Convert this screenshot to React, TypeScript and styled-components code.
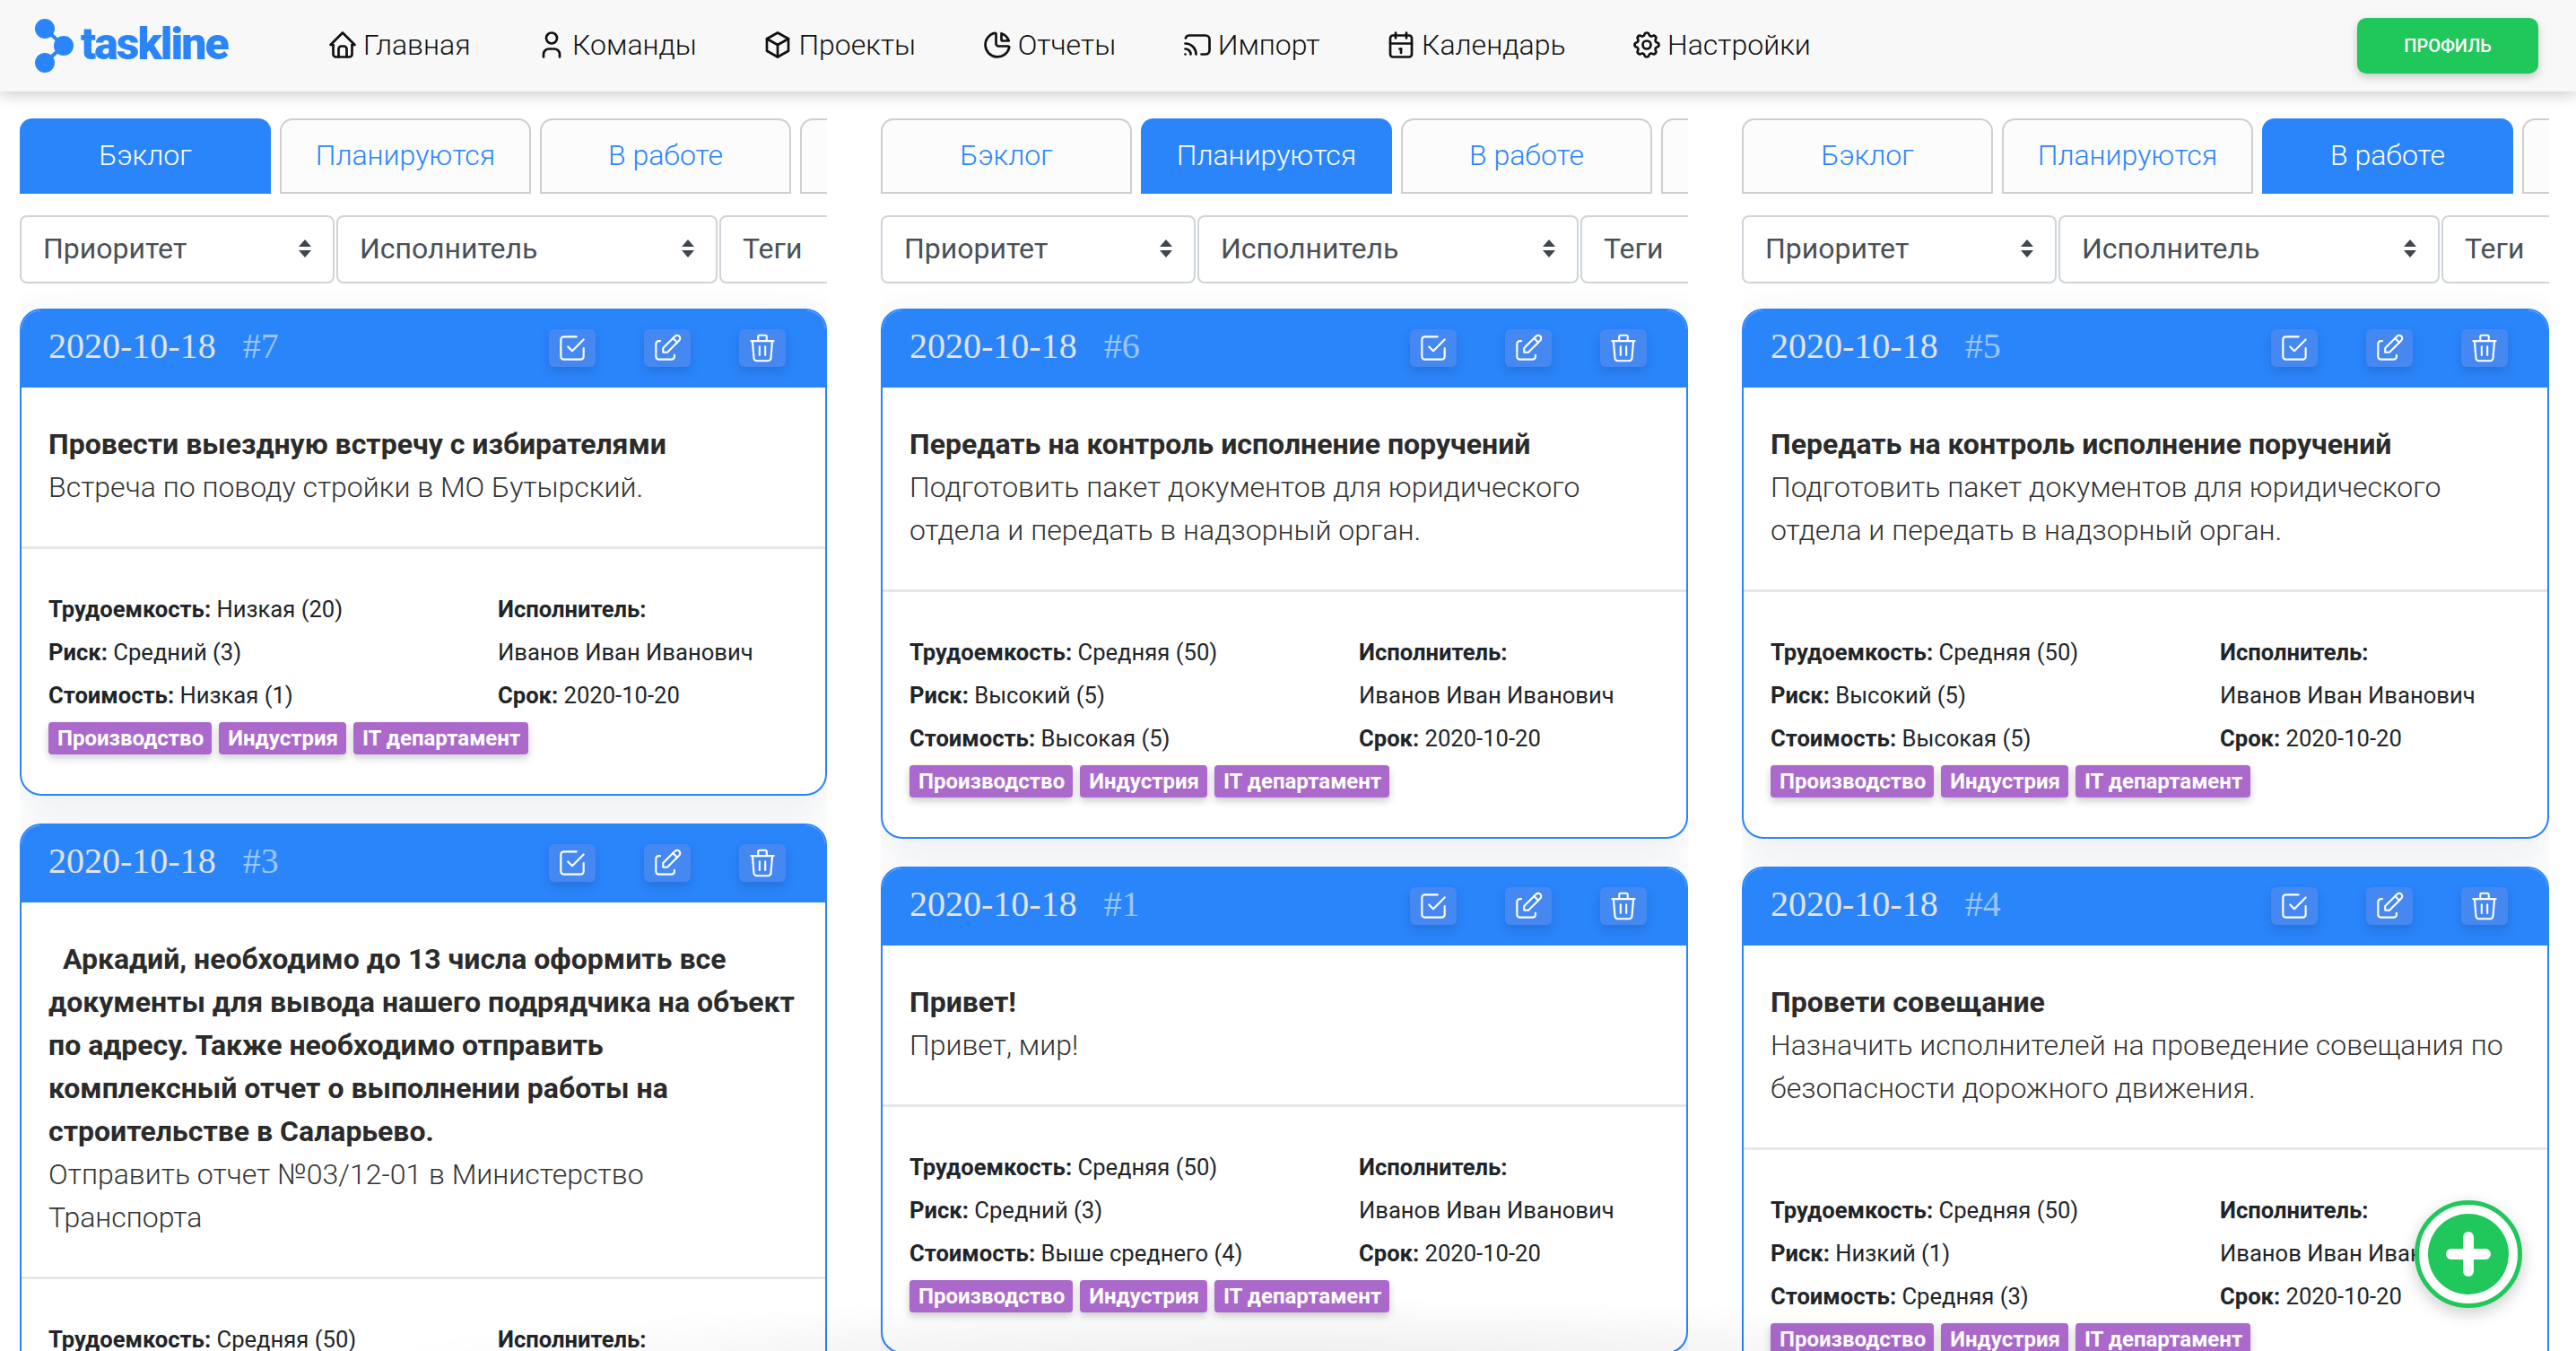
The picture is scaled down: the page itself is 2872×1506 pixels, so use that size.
import styled, { createGlobalStyle } from "styled-components";
import {
  TbBox,
  TbCalendar,
  TbCast,
  TbChartPie,
  TbCheckbox,
  TbEdit,
  TbHome,
  TbSettings,
  TbTrash,
  TbUser,
} from "react-icons/tb";

const GlobalStyle = createGlobalStyle`
  html, body {
    margin: 0;
    height: 100%;
    overflow: hidden;
    background: #fff;
    font-family: Roboto, "Noto Sans", sans-serif;
    color: #212529;
  }
  * { box-sizing: border-box; }
`;

const Page = styled.div`
  width: 2872px;
  height: 1506px;
  overflow: hidden;
  display: flex;
  flex-direction: column;
`;

const Navbar = styled.header`
  position: relative;
  z-index: 5;
  flex: none;
  height: 102px;
  display: flex;
  align-items: center;
  padding: 0 42px 0 38px;
  background: #f8f8f8;
  box-shadow: 0 3px 16px rgba(0, 0, 0, 0.22);
`;

const Logo = styled.div`
  display: flex;
  align-items: center;
  gap: 6px;
  width: 326px;
  flex: none;
`;

const LogoText = styled.span`
  margin-top: -4px;
  color: #2a85fb;
  font-size: 50px;
  font-weight: 900;
  letter-spacing: -2px;
  line-height: 1;
`;

const Menu = styled.nav`
  display: flex;
  align-items: center;
  gap: 72.5px;
  flex: 1;
  padding-bottom: 2px;
`;

const MenuItem = styled.a`
  display: flex;
  align-items: center;
  gap: 5px;
  font-size: 32px;
  font-weight: 300;
  color: #111;
  svg {
    width: 36px;
    height: 36px;
    stroke-width: 1.8;
  }
`;

const ProfileButton = styled.button`
  width: 202px;
  height: 62px;
  border: 0;
  border-radius: 10px;
  background: #20c75a;
  color: #fff;
  font-family: inherit;
  font-size: 20px;
  font-weight: 500;
  text-transform: uppercase;
  box-shadow: 0 4px 10px rgba(0, 0, 0, 0.2);
`;

const Board = styled.main`
  flex: 1;
  min-height: 0;
  display: grid;
  grid-template-columns: repeat(3, 900px);
  gap: 60px;
  padding: 30px 0 0 22px;
`;

const Column = styled.section`
  min-width: 0;
  height: 100%;
  overflow: hidden;
  display: flex;
  flex-direction: column;
`;

const Tabs = styled.div`
  flex: none;
  display: flex;
  gap: 10px;
`;

const Tab = styled.div<{ $active?: boolean }>`
  flex: none;
  width: 280px;
  height: 84px;
  display: flex;
  align-items: center;
  justify-content: center;
  padding-bottom: 2px;
  border: 2px solid ${(p) => (p.$active ? "#2a85fb" : "#cfcfcf")};
  border-radius: 14px 14px 0 0;
  background: ${(p) => (p.$active ? "#2a85fb" : "#fcfcfc")};
  color: ${(p) => (p.$active ? "#fff" : "#2a85fb")};
  font-size: 32px;
  font-weight: 300;
`;

const Filters = styled.div`
  flex: none;
  display: flex;
  gap: 2px;
  margin-top: 24px;
`;

const Select = styled.div<{ $width: number }>`
  flex: none;
  width: ${(p) => p.$width}px;
  height: 76px;
  display: flex;
  align-items: center;
  justify-content: space-between;
  padding: 0 22px 2px 24px;
  border: 2px solid #ced4da;
  border-radius: 8px;
  background: #fff;
  color: #495057;
  font-size: 32px;
  font-weight: 400;
`;

const CardList = styled.div`
  flex: 1;
  min-height: 0;
  overflow: hidden;
  display: flex;
  flex-direction: column;
  gap: 31px;
  margin-top: 8px;
  padding-top: 20px;
`;

const Card = styled.article`
  flex: none;
  border: 2px solid #2a85fb;
  border-radius: 24px;
  background: #fff;
  overflow: hidden;
  box-shadow: 0 10px 44px rgba(30, 60, 100, 0.1);
`;

const CardHeader = styled.div`
  display: flex;
  align-items: center;
  justify-content: space-between;
  margin: -2px -2px 0;
  padding: 0 46px 0 32px;
  height: 88px;
  background: #2a85fb;
`;

const CardDate = styled.div`
  font-family: "Liberation Serif", "Times New Roman", serif;
  font-size: 40px;
  margin-top: -6px;
  color: #e2e2e2;
`;

const CardNumber = styled.span`
  margin-left: 30px;
  color: #9cc6fb;
`;

const CardActions = styled.div`
  display: flex;
  gap: 54px;
`;

const ActionButton = styled.button`
  width: 52px;
  height: 42px;
  display: flex;
  align-items: center;
  justify-content: center;
  padding: 0;
  border: 0;
  border-radius: 6px;
  background: #4588f2;
  color: #fff;
  box-shadow: 0 5px 12px rgba(20, 60, 130, 0.25);
  svg {
    width: 38px;
    height: 38px;
    stroke-width: 1.35;
  }
`;

const CardBody = styled.div`
  padding: 39px 30px 42px;
  border-bottom: 3px solid #e6e6e6;
  font-size: 32px;
  line-height: 48px;
`;

const CardTitle = styled.div`
  font-weight: 700;
  color: #2b2b2b;
`;

const CardText = styled.div`
  font-weight: 300;
  color: #333;
`;

const CardFooter = styled.div`
  padding: 43px 30px 44px;
`;

const MetaGrid = styled.div`
  display: grid;
  grid-template-columns: 501px 1fr;
  font-size: 25.6px;
  line-height: 48px;
  color: #212529;
`;

const MetaLabel = styled.b`
  font-weight: 700;
`;

const TagRow = styled.div`
  display: flex;
  gap: 8px;
  margin-top: 6px;
`;

const Tag = styled.span`
  height: 36px;
  display: flex;
  align-items: center;
  padding: 0 9px 0 10px;
  border-radius: 4px;
  background: #ab69cc;
  color: #fff;
  font-size: 24px;
  font-weight: 700;
  box-shadow: 0 4px 8px rgba(0, 0, 0, 0.2);
`;

const AddButton = styled.button`
  position: fixed;
  left: 2692px;
  top: 1338px;
  z-index: 6;
  width: 120px;
  height: 120px;
  display: flex;
  align-items: center;
  justify-content: center;
  padding: 0;
  border: 5px solid #20c75a;
  border-radius: 50%;
  background: #fff;
  box-shadow: 0 6px 18px rgba(0, 0, 0, 0.2);
`;

const AddCircle = styled.span`
  position: relative;
  width: 90px;
  height: 90px;
  border-radius: 50%;
  background: #20c75a;
  &::before,
  &::after {
    content: "";
    position: absolute;
    left: 20px;
    top: 39px;
    width: 50px;
    height: 12px;
    border-radius: 6px;
    background: #fff;
  }
  &::after {
    transform: rotate(90deg);
  }
`;

const BottomFade = styled.div`
  position: fixed;
  left: 400px;
  right: 400px;
  bottom: 0;
  height: 60px;
  z-index: 4;
  pointer-events: none;
  background: radial-gradient(ellipse at 50% 120%, rgba(0, 0, 0, 0.07), rgba(0, 0, 0, 0) 70%);
`;

const ArrowsIcon = () => (
  <svg width="18" height="20" viewBox="0 0 18 20" fill="#3f454b">
    <path d="M9 0l7 8H2zM9 20l-7-8h14z" />
  </svg>
);

const LogoIcon = () => (
  <svg width="46" height="62" viewBox="0 0 46 62" fill="#2a85fb">
    <circle cx="12" cy="12" r="11" />
    <circle cx="33" cy="31" r="11" />
    <circle cx="12" cy="50" r="11" />
    <path d="M12 12L33 31L12 50" fill="none" stroke="#2a85fb" strokeWidth="4" />
  </svg>
);

const menu = [
  { label: "Главная", icon: <TbHome /> },
  { label: "Команды", icon: <TbUser /> },
  { label: "Проекты", icon: <TbBox /> },
  { label: "Отчеты", icon: <TbChartPie /> },
  { label: "Импорт", icon: <TbCast /> },
  { label: "Календарь", icon: <TbCalendar /> },
  { label: "Настройки", icon: <TbSettings /> },
];

const tabs = ["Бэклог", "Планируются", "В работе", "Готово"];

type Task = {
  id: number;
  title: string;
  text: string;
  labor: string;
  risk: string;
  cost: string;
};

const contractText =
  "Подготовить пакет документов для юридического отдела и передать в надзорный орган.";

const columns: { active: number; tasks: Task[] }[] = [
  {
    active: 0,
    tasks: [
      {
        id: 7,
        title: "Провести выездную встречу с избирателями",
        text: "Встреча по поводу стройки в МО Бутырский.",
        labor: "Низкая (20)",
        risk: "Средний (3)",
        cost: "Низкая (1)",
      },
      {
        id: 3,
        title:
          "\u00a0\u00a0Аркадий, необходимо до 13 числа оформить все документы для вывода нашего подрядчика на объект по адресу. Также необходимо отправить комплексный отчет о выполнении работы на строительстве в Саларьево.",
        text: "Отправить отчет №03/12-01 в Министерство Транспорта",
        labor: "Средняя (50)",
        risk: "Средний (3)",
        cost: "Средняя (3)",
      },
    ],
  },
  {
    active: 1,
    tasks: [
      {
        id: 6,
        title: "Передать на контроль исполнение поручений",
        text: contractText,
        labor: "Средняя (50)",
        risk: "Высокий (5)",
        cost: "Высокая (5)",
      },
      {
        id: 1,
        title: "Привет!",
        text: "Привет, мир!",
        labor: "Средняя (50)",
        risk: "Средний (3)",
        cost: "Выше среднего (4)",
      },
    ],
  },
  {
    active: 2,
    tasks: [
      {
        id: 5,
        title: "Передать на контроль исполнение поручений",
        text: contractText,
        labor: "Средняя (50)",
        risk: "Высокий (5)",
        cost: "Высокая (5)",
      },
      {
        id: 4,
        title: "Провети совещание",
        text: "Назначить исполнителей на проведение совещания по безопасности дорожного движения.",
        labor: "Средняя (50)",
        risk: "Низкий (1)",
        cost: "Средняя (3)",
      },
    ],
  },
];

const TaskCard = ({ task }: { task: Task }) => (
  <Card>
    <CardHeader>
      <CardDate>
        2020-10-18
        <CardNumber>#{task.id}</CardNumber>
      </CardDate>
      <CardActions>
        <ActionButton><TbCheckbox /></ActionButton>
        <ActionButton><TbEdit /></ActionButton>
        <ActionButton><TbTrash /></ActionButton>
      </CardActions>
    </CardHeader>
    <CardBody>
      <CardTitle>{task.title}</CardTitle>
      <CardText>{task.text}</CardText>
    </CardBody>
    <CardFooter>
      <MetaGrid>
        <div><MetaLabel>Трудоемкость:</MetaLabel> {task.labor}</div>
        <div><MetaLabel>Исполнитель:</MetaLabel></div>
        <div><MetaLabel>Риск:</MetaLabel> {task.risk}</div>
        <div>Иванов Иван Иванович</div>
        <div><MetaLabel>Стоимость:</MetaLabel> {task.cost}</div>
        <div><MetaLabel>Срок:</MetaLabel> 2020-10-20</div>
      </MetaGrid>
      <TagRow>
        <Tag>Производство</Tag>
        <Tag>Индустрия</Tag>
        <Tag>IT департамент</Tag>
      </TagRow>
    </CardFooter>
  </Card>
);

export default function App() {
  return (
    <Page>
      <GlobalStyle />
      <Navbar>
        <Logo>
          <LogoIcon />
          <LogoText>taskline</LogoText>
        </Logo>
        <Menu>
          {menu.map((item) => (
            <MenuItem key={item.label}>
              {item.icon}
              {item.label}
            </MenuItem>
          ))}
        </Menu>
        <ProfileButton>Профиль</ProfileButton>
      </Navbar>
      <Board>
        {columns.map((column) => (
          <Column key={column.active}>
            <Tabs>
              {tabs.map((tab, index) => (
                <Tab key={tab} $active={index === column.active}>{tab}</Tab>
              ))}
            </Tabs>
            <Filters>
              <Select $width={351}>Приоритет<ArrowsIcon /></Select>
              <Select $width={425}>Исполнитель<ArrowsIcon /></Select>
              <Select $width={300}>Теги<ArrowsIcon /></Select>
            </Filters>
            <CardList>
              {column.tasks.map((task) => (
                <TaskCard key={task.id} task={task} />
              ))}
            </CardList>
          </Column>
        ))}
      </Board>
      <BottomFade />
      <AddButton aria-label="Добавить"><AddCircle /></AddButton>
    </Page>
  );
}
